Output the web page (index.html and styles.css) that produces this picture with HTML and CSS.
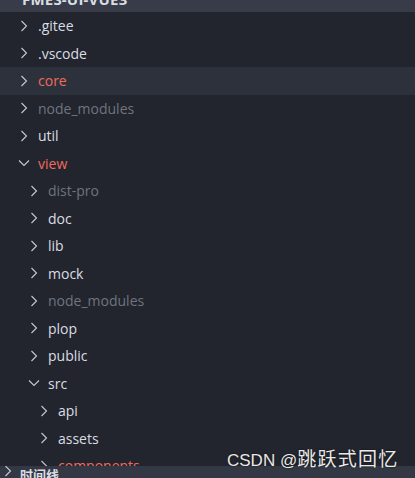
FILE: index.html
```html
<!DOCTYPE html>
<html>
<head>
<meta charset="utf-8">
<link rel="stylesheet" href="styles.css">
</head>
<body>
<div class="app">
  <div class="header">
    <svg class="chev" viewBox="0 0 16 16"><path d="M3 5.5 L8 10.5 L13 5.5"/></svg>
    <span class="title">FMES-UI-VUE3</span>
  </div>
  <div class="tree">
    <div class="row l0"><svg class="chev" viewBox="0 0 16 16"><path d="M5.5 3 L10.5 8 L5.5 13"/></svg><span>.gitee</span></div>
    <div class="row l0"><svg class="chev" viewBox="0 0 16 16"><path d="M5.5 3 L10.5 8 L5.5 13"/></svg><span>.vscode</span></div>
    <div class="row l0 sel err"><svg class="chev" viewBox="0 0 16 16"><path d="M5.5 3 L10.5 8 L5.5 13"/></svg><span>core</span></div>
    <div class="row l0 ign"><svg class="chev" viewBox="0 0 16 16"><path d="M5.5 3 L10.5 8 L5.5 13"/></svg><span>node_modules</span></div>
    <div class="row l0"><svg class="chev" viewBox="0 0 16 16"><path d="M5.5 3 L10.5 8 L5.5 13"/></svg><span>util</span></div>
    <div class="row l0 err"><svg class="chev" viewBox="0 0 16 16"><path d="M3 5.5 L8 10.5 L13 5.5"/></svg><span>view</span></div>
    <div class="row l1 ign"><svg class="chev" viewBox="0 0 16 16"><path d="M5.5 3 L10.5 8 L5.5 13"/></svg><span>dist-pro</span></div>
    <div class="row l1"><svg class="chev" viewBox="0 0 16 16"><path d="M5.5 3 L10.5 8 L5.5 13"/></svg><span>doc</span></div>
    <div class="row l1"><svg class="chev" viewBox="0 0 16 16"><path d="M5.5 3 L10.5 8 L5.5 13"/></svg><span>lib</span></div>
    <div class="row l1"><svg class="chev" viewBox="0 0 16 16"><path d="M5.5 3 L10.5 8 L5.5 13"/></svg><span>mock</span></div>
    <div class="row l1 ign"><svg class="chev" viewBox="0 0 16 16"><path d="M5.5 3 L10.5 8 L5.5 13"/></svg><span>node_modules</span></div>
    <div class="row l1"><svg class="chev" viewBox="0 0 16 16"><path d="M5.5 3 L10.5 8 L5.5 13"/></svg><span>plop</span></div>
    <div class="row l1"><svg class="chev" viewBox="0 0 16 16"><path d="M5.5 3 L10.5 8 L5.5 13"/></svg><span>public</span></div>
    <div class="row l1"><svg class="chev" viewBox="0 0 16 16"><path d="M3 5.5 L8 10.5 L13 5.5"/></svg><span>src</span></div>
    <div class="row l2"><svg class="chev" viewBox="0 0 16 16"><path d="M5.5 3 L10.5 8 L5.5 13"/></svg><span>api</span></div>
    <div class="row l2"><svg class="chev" viewBox="0 0 16 16"><path d="M5.5 3 L10.5 8 L5.5 13"/></svg><span>assets</span></div>
    <div class="row l2 err"><svg class="chev" viewBox="0 0 16 16"><path d="M5.5 3 L10.5 8 L5.5 13"/></svg><span>components</span></div>
  </div>
  <div class="footer">
    <svg class="chev" viewBox="0 0 16 16"><path d="M5.5 3 L10.5 8 L5.5 13"/></svg>
    <span class="ftitle">时间线</span>
  </div>
  <div class="watermark">CSDN @<span class="cjk">跳跃式回忆</span></div>
</div>
</body>
</html>
```
FILE: styles.css
```css
html, body {
  margin: 0;
  padding: 0;
  background: #22252d;
}
.app {
  position: relative;
  width: 415px;
  height: 478px;
  display: grid;
  grid-template-rows: 12px 1fr 12px;
  overflow: hidden;
  font-family: "Open Sans", "Noto Sans", sans-serif;
  font-size: 14px;
  color: #dadde3;
}
.chev {
  width: 16px;
  height: 16px;
  flex: none;
  fill: none;
  stroke: #c5cad3;
  stroke-width: 1.1;
}
.header {
  background: #383c49;
  display: flex;
  align-items: flex-end;
  gap: 6px;
  padding-left: 0;
  overflow: hidden;
}
.header .chev {
  margin-bottom: 7px;
}
.header .title {
  font-weight: 700;
  font-size: 15px;
  letter-spacing: 0.2px;
  line-height: 20px;
  margin-bottom: 3px;
  color: #dadde3;
}
.tree {
  overflow: hidden;
}
.row {
  height: 27.5px;
  display: flex;
  align-items: center;
  gap: 6px;
  box-sizing: border-box;
}
.row span {
  line-height: 20px;
  margin-top: 1px;
}
.l0 { padding-left: 16px; }
.l1 { padding-left: 26px; }
.l2 { padding-left: 36px; }
.sel { background: #2d313b; }
.err { color: #f06b5e; }
.ign { color: #6e7480; }
.footer {
  background: #343844;
  display: flex;
  align-items: flex-start;
  gap: 4px;
  overflow: hidden;
  padding-left: 0;
}
.footer .chev {
  margin-top: -3px;
}
.ftitle {
  font-weight: 700;
  font-size: 13px;
  line-height: 20px;
  margin-top: -1px;
  font-family: "Noto Sans CJK SC", sans-serif;
}
.watermark {
  position: absolute;
  left: 227px;
  top: 447px;
  font-family: "Liberation Sans", "Noto Sans CJK SC", sans-serif;
  font-size: 17px;
  line-height: 22px;
  color: #e9e9e9;
  text-shadow: 0 0 2px rgba(0,0,0,0.6);
  white-space: nowrap;
}
.watermark .cjk {
  font-family: "Noto Sans CJK SC", sans-serif;
  font-size: 19px;
  letter-spacing: 1.3px;
}
```
